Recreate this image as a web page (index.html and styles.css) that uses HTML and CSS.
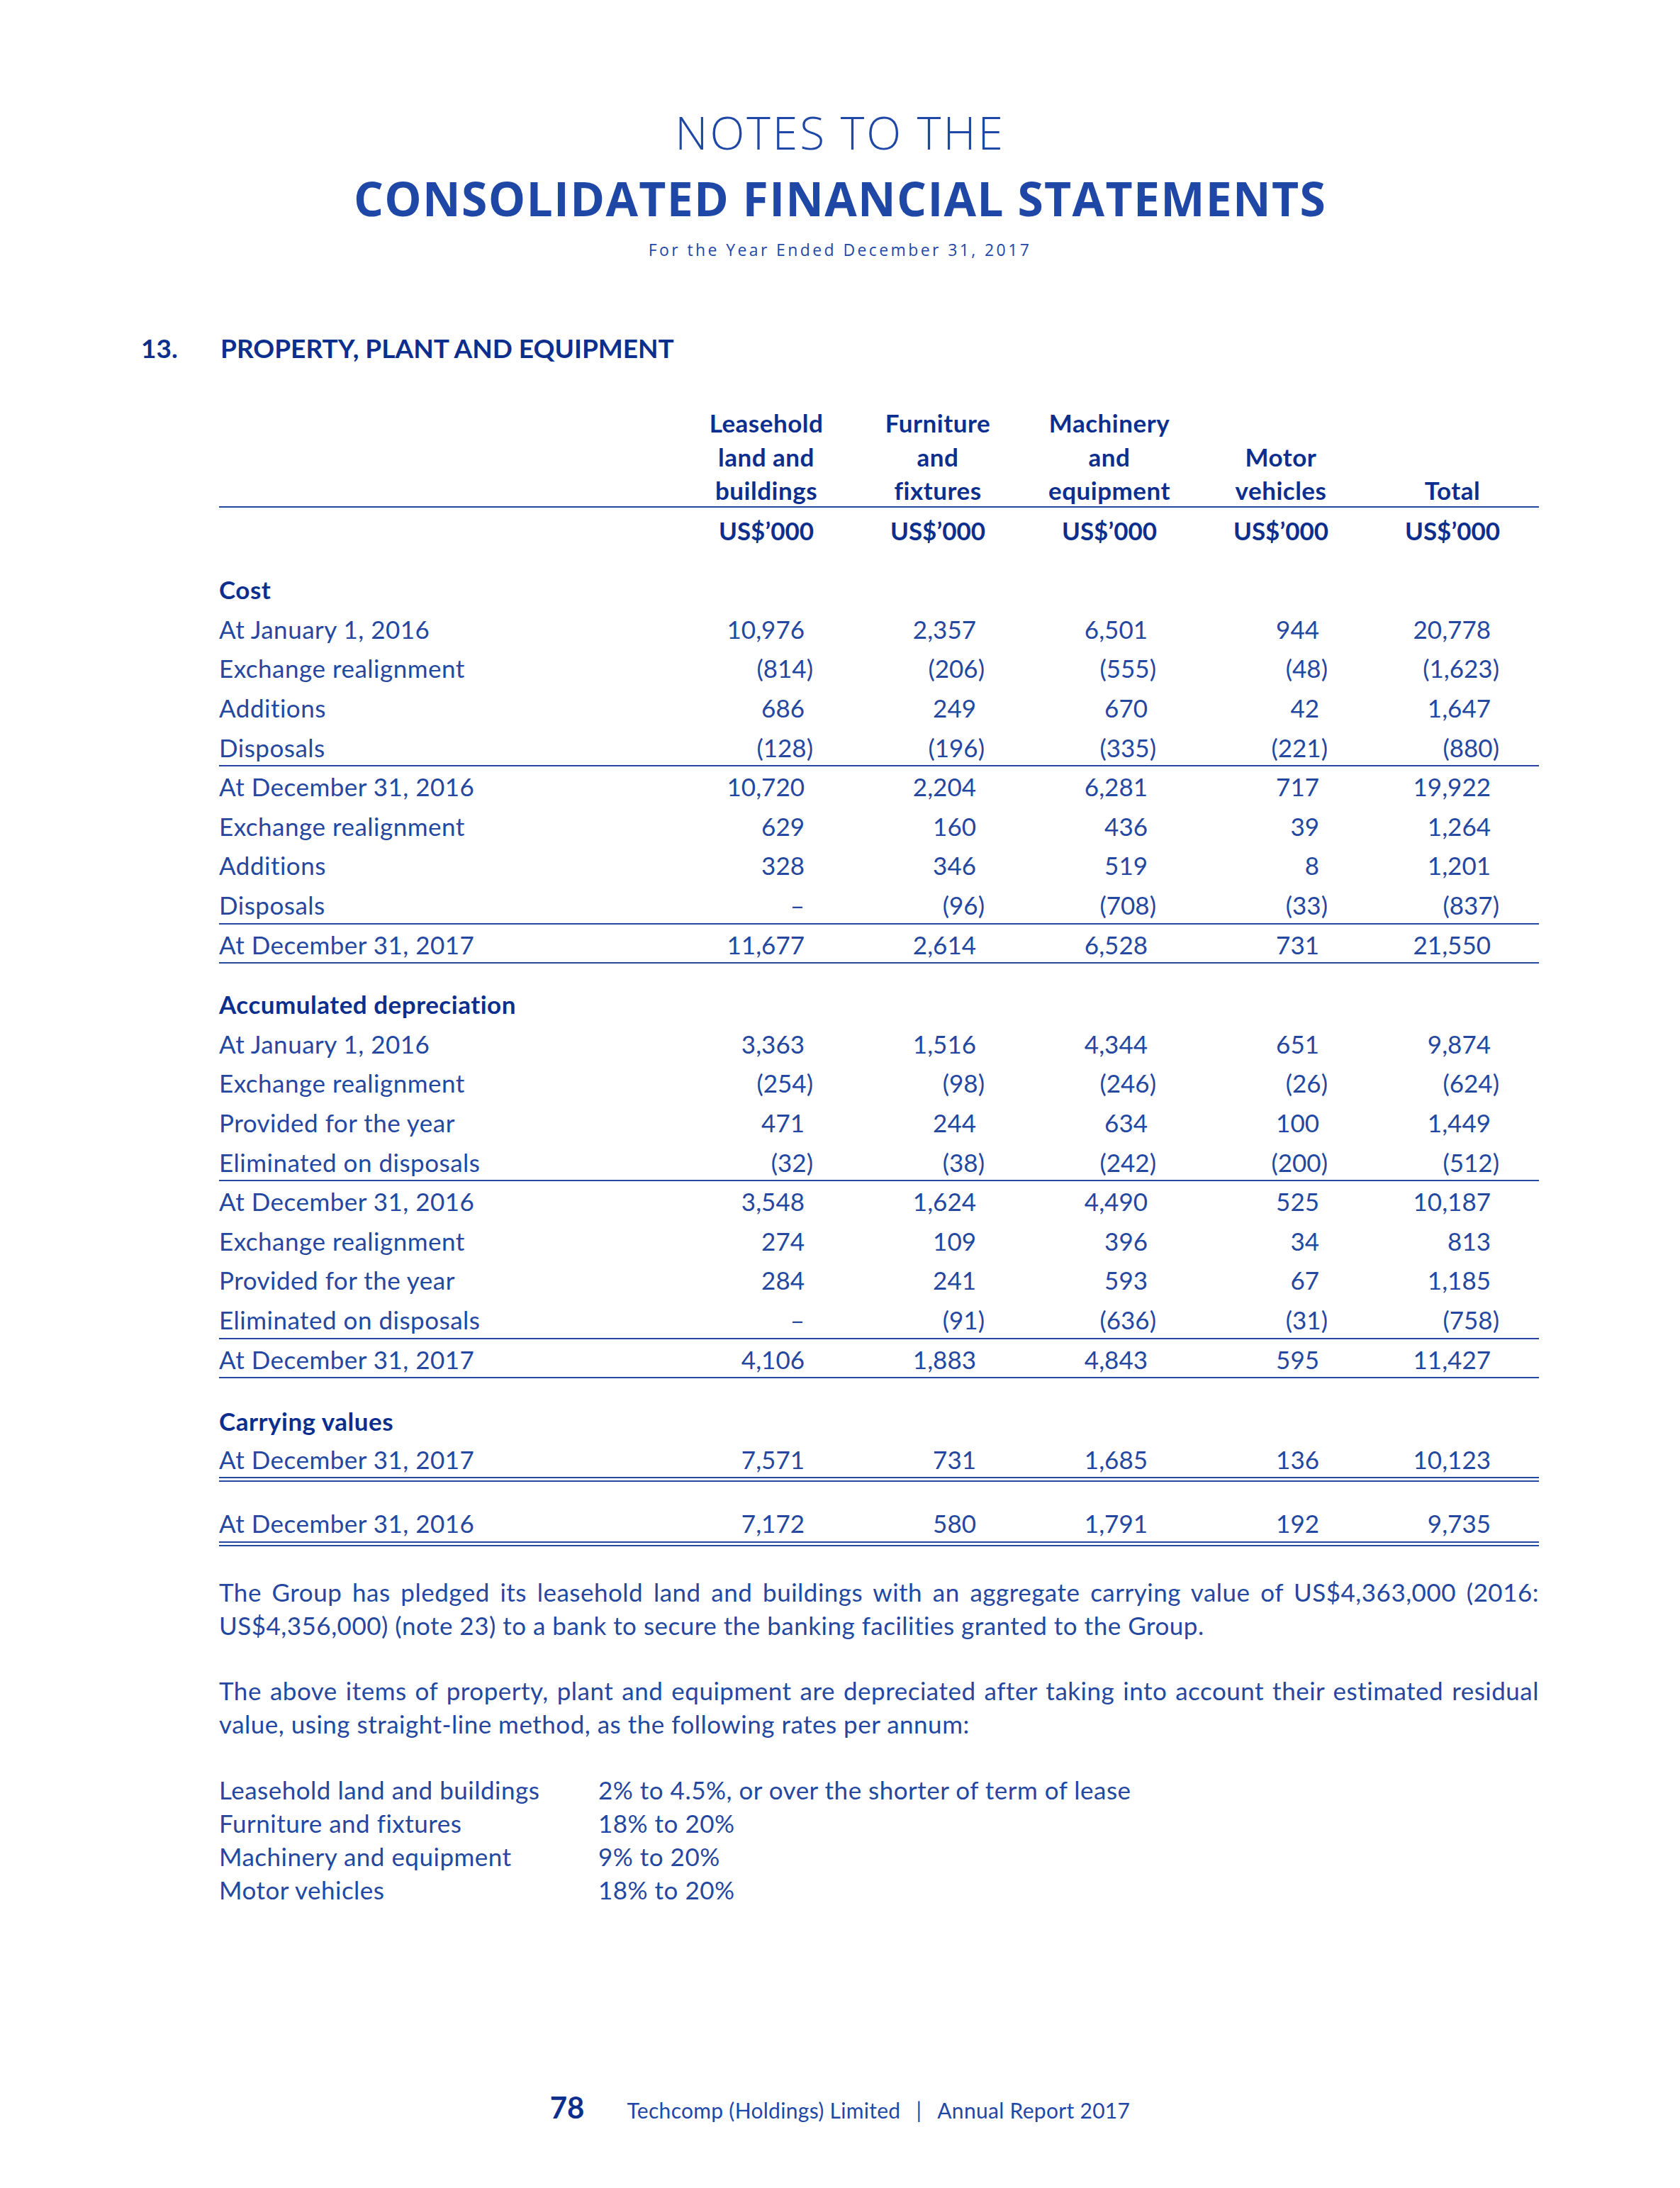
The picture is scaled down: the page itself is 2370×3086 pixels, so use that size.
FILE: index.html
```html
<!DOCTYPE html>
<html lang="en">
<head>
<meta charset="utf-8">
<title>Notes to the Consolidated Financial Statements</title>
<link rel="stylesheet" href="styles.css">
</head>
<body>
<div class="page">
  <header class="title">
    <div class="t1">NOTES TO THE</div>
    <div class="t2">CONSOLIDATED FINANCIAL STATEMENTS</div>
    <div class="t3">For the Year Ended December 31, 2017</div>
  </header>

  <section class="note">
    <h2 class="note-head"><span class="note-no">13.</span><span>PROPERTY, PLANT AND EQUIPMENT</span></h2>

    <div class="body">
      <div class="fin">
        <div class="row head">
          <div></div>
          <div>Leasehold<br>land and<br>buildings</div>
          <div>Furniture<br>and<br>fixtures</div>
          <div>Machinery<br>and<br>equipment</div>
          <div>Motor<br>vehicles</div>
          <div>Total</div>
        </div>
        <div class="row units">
          <div></div>
          <div>US$’000</div><div>US$’000</div><div>US$’000</div><div>US$’000</div><div>US$’000</div>
        </div>

        <div class="gap g1"></div>
        <div class="row sub"><div>Cost</div></div>
        <div class="row"><div>At January 1, 2016</div><div class="n">10,976</div><div class="n">2,357</div><div class="n">6,501</div><div class="n">944</div><div class="n">20,778</div></div>
        <div class="row"><div>Exchange realignment</div><div class="n neg">(814)</div><div class="n neg">(206)</div><div class="n neg">(555)</div><div class="n neg">(48)</div><div class="n neg">(1,623)</div></div>
        <div class="row"><div>Additions</div><div class="n">686</div><div class="n">249</div><div class="n">670</div><div class="n">42</div><div class="n">1,647</div></div>
        <div class="row rule"><div>Disposals</div><div class="n neg">(128)</div><div class="n neg">(196)</div><div class="n neg">(335)</div><div class="n neg">(221)</div><div class="n neg">(880)</div></div>
        <div class="row"><div>At December 31, 2016</div><div class="n">10,720</div><div class="n">2,204</div><div class="n">6,281</div><div class="n">717</div><div class="n">19,922</div></div>
        <div class="row"><div>Exchange realignment</div><div class="n">629</div><div class="n">160</div><div class="n">436</div><div class="n">39</div><div class="n">1,264</div></div>
        <div class="row"><div>Additions</div><div class="n">328</div><div class="n">346</div><div class="n">519</div><div class="n">8</div><div class="n">1,201</div></div>
        <div class="row rule"><div>Disposals</div><div class="n">–</div><div class="n neg">(96)</div><div class="n neg">(708)</div><div class="n neg">(33)</div><div class="n neg">(837)</div></div>
        <div class="row rule"><div>At December 31, 2017</div><div class="n">11,677</div><div class="n">2,614</div><div class="n">6,528</div><div class="n">731</div><div class="n">21,550</div></div>

        <div class="gap g2"></div>
        <div class="row sub"><div>Accumulated depreciation</div></div>
        <div class="row"><div>At January 1, 2016</div><div class="n">3,363</div><div class="n">1,516</div><div class="n">4,344</div><div class="n">651</div><div class="n">9,874</div></div>
        <div class="row"><div>Exchange realignment</div><div class="n neg">(254)</div><div class="n neg">(98)</div><div class="n neg">(246)</div><div class="n neg">(26)</div><div class="n neg">(624)</div></div>
        <div class="row"><div>Provided for the year</div><div class="n">471</div><div class="n">244</div><div class="n">634</div><div class="n">100</div><div class="n">1,449</div></div>
        <div class="row rule"><div>Eliminated on disposals</div><div class="n neg">(32)</div><div class="n neg">(38)</div><div class="n neg">(242)</div><div class="n neg">(200)</div><div class="n neg">(512)</div></div>
        <div class="row"><div>At December 31, 2016</div><div class="n">3,548</div><div class="n">1,624</div><div class="n">4,490</div><div class="n">525</div><div class="n">10,187</div></div>
        <div class="row"><div>Exchange realignment</div><div class="n">274</div><div class="n">109</div><div class="n">396</div><div class="n">34</div><div class="n">813</div></div>
        <div class="row"><div>Provided for the year</div><div class="n">284</div><div class="n">241</div><div class="n">593</div><div class="n">67</div><div class="n">1,185</div></div>
        <div class="row rule"><div>Eliminated on disposals</div><div class="n">–</div><div class="n neg">(91)</div><div class="n neg">(636)</div><div class="n neg">(31)</div><div class="n neg">(758)</div></div>
        <div class="row rule"><div>At December 31, 2017</div><div class="n">4,106</div><div class="n">1,883</div><div class="n">4,843</div><div class="n">595</div><div class="n">11,427</div></div>

        <div class="gap g3"></div>
        <div class="row sub"><div>Carrying values</div></div>
        <div class="row dbl"><div>At December 31, 2017</div><div class="n">7,571</div><div class="n">731</div><div class="n">1,685</div><div class="n">136</div><div class="n">10,123</div></div>
        <div class="gap g4"></div>
        <div class="row dbl"><div>At December 31, 2016</div><div class="n">7,172</div><div class="n">580</div><div class="n">1,791</div><div class="n">192</div><div class="n">9,735</div></div>
      </div>

      <p class="para p1">The Group has pledged its leasehold land and buildings with an aggregate carrying value of US$4,363,000 (2016: US$4,356,000) (note 23) to a bank to secure the banking facilities granted to the Group.</p>

      <p class="para p2">The above items of property, plant and equipment are depreciated after taking into account their estimated residual value, using straight-line method, as the following rates per annum:</p>

      <dl class="rates">
        <dt>Leasehold land and buildings</dt><dd>2% to 4.5%, or over the shorter of term of lease</dd>
        <dt>Furniture and fixtures</dt><dd>18% to 20%</dd>
        <dt>Machinery and equipment</dt><dd>9% to 20%</dd>
        <dt>Motor vehicles</dt><dd>18% to 20%</dd>
      </dl>
    </div>
  </section>

  <footer class="foot">
    <span class="pg">78</span>
    <span class="ft">Techcomp (Holdings) Limited</span>
    <span class="sep">|</span>
    <span class="ft">Annual Report 2017</span>
  </footer>
</div>
</body>
</html>
```

FILE: styles.css
```css
html, body {
  margin: 0;
  padding: 0;
  background: #ffffff;
}

.page {
  width: 1972px;
  height: 3086px;
  margin: 0 auto;
  padding-top: 154px;
  box-sizing: border-box;
  color: #2447a0;
  font-family: Lato, "Open Sans", "Liberation Sans", sans-serif;
  font-size: 35px;
  letter-spacing: 0.5px;
  position: relative;
}

/* ---------- title ---------- */
.title {
  text-align: center;
  font-family: "Open Sans", Lato, sans-serif;
  color: #1f48a6;
}
.t1 {
  font-size: 64px;
  line-height: 66px;
  font-weight: 300;
  letter-spacing: 3px;
}
.t2 {
  margin-top: 25px;
  font-size: 66px;
  line-height: 68px;
  font-weight: 700;
  letter-spacing: 1.3px;
}
.t3 {
  margin-top: 24px;
  font-size: 23px;
  line-height: 30px;
  letter-spacing: 3.4px;
}

/* ---------- note heading ---------- */
.note-head {
  margin: 102px 0 0 0;
  display: flex;
  font-size: 37px;
  line-height: 44px;
  font-weight: 700;
  letter-spacing: 0;
  color: #0c2f8e;
}
.note-no {
  width: 112px;
}

.body {
  margin-left: 110px;
}

/* ---------- financial table ---------- */
.fin {
  margin-top: 60px;
}
.row {
  display: grid;
  grid-template-columns: 651px repeat(5, 242px);
  height: 55.6px;
  align-items: center;
  white-space: nowrap;
}
.row .n {
  text-align: right;
  padding-right: 67px;
  letter-spacing: 0;
}
.row .n.neg {
  padding-right: 55px;
}
.rule {
  box-shadow: inset 0 -2px 0 #2447a0;
}
.dbl {
  box-sizing: border-box;
  height: 58.5px;
  border-bottom: 7px double #2447a0;
}

.head {
  height: auto;
  align-items: end;
  line-height: 47.5px;
  font-weight: 700;
  text-align: center;
  color: #0c2f8e;
  box-shadow: inset 0 -2px 0 #2447a0;
}
.units {
  height: 60px;
  font-weight: 700;
  text-align: center;
  color: #0c2f8e;
  padding-top: 2px;
}
.units > div {
  letter-spacing: 0;
}
.sub {
  font-weight: 700;
  color: #0c2f8e;
}

.gap.g1 { height: 26px; }
.gap.g2 { height: 29px; }
.gap.g3 { height: 32px; }
.gap.g4 { height: 32px; }

/* ---------- text ---------- */
.para {
  margin: 0;
  line-height: 47px;
  text-align: justify;
}
.p1 { margin-top: 41px; }
.p2 { margin-top: 45px; }

.rates {
  margin: 46px 0 0 0;
  display: grid;
  grid-template-columns: 535px auto;
  line-height: 47px;
}
.rates dt, .rates dd {
  margin: 0;
}

/* ---------- footer ---------- */
.foot {
  position: absolute;
  left: 0;
  right: 0;
  top: 2947px;
  display: flex;
  justify-content: center;
  align-items: baseline;
  line-height: 50px;
  color: #1f48a6;
  letter-spacing: 0.3px;
}
.pg {
  font-size: 42px;
  font-weight: 700;
  color: #0c2f8e;
  margin-right: 60px;
  letter-spacing: 0;
}
.ft {
  font-size: 30px;
}
.sep {
  font-size: 30px;
  margin: 0 22px;
}
```
